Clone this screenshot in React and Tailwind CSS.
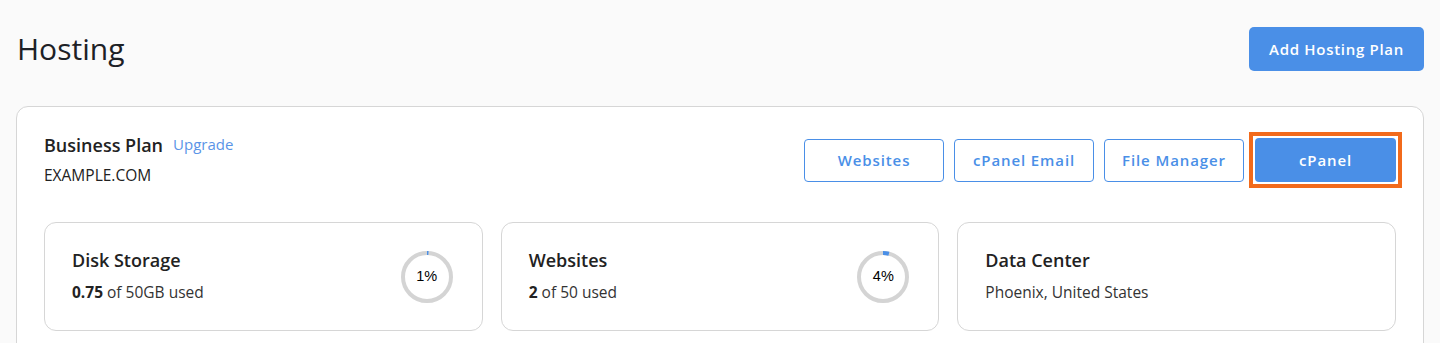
import React from "react";

function Ring({ pct }) {
  const r = 24;
  const c = 2 * Math.PI * r;
  const len = (pct / 100) * c;
  return (
    <div className="relative w-[52px] h-[52px] shrink-0">
      <svg width="52" height="52" viewBox="0 0 52 52" className="absolute inset-0">
        <circle cx="26" cy="26" r={r} fill="none" stroke="#d4d4d4" strokeWidth="4" />
        <circle
          cx="26"
          cy="26"
          r={r}
          fill="none"
          stroke="#4a8fe7"
          strokeWidth="4"
          strokeDasharray={`${len} ${c}`}
          transform="rotate(-90 26 26)"
        />
      </svg>
      <div
        className="absolute inset-0 flex items-center justify-center text-[14.5px] text-black"
        style={{ fontFamily: '"Liberation Sans", Arial, sans-serif' }}
      >
        {pct}%
      </div>
    </div>
  );
}

function StatCard({ title, children, pct }) {
  return (
    <div className="flex-1 h-[109px] bg-white border border-[#d6d6d6] rounded-[12px] pl-[27px] pr-[29px] flex items-center justify-between">
      <div className="flex flex-col mb-[4px]">
        <div className="text-[18px] leading-[24px] font-semibold text-[#222]">{title}</div>
        <div className="mt-[10px] text-[15.5px] leading-[20px] text-[#333]">{children}</div>
      </div>
      {pct !== undefined && <Ring pct={pct} />}
    </div>
  );
}

export default function App() {
  const outlineBtn =
    "w-[140px] h-[43px] rounded-[4px] border border-[#4a8fe7] bg-white text-[#4a8fe7] text-[15px] font-semibold tracking-[0.9px] flex items-center justify-center";
  return (
    <div
      className="min-h-[343px] bg-[#fafafa] px-4 pt-[27px]"
      style={{ fontFamily: '"Open Sans", "Noto Sans", sans-serif' }}
    >
      <div className="flex items-center justify-between h-[44px]">
        <h1 className="text-[30px] leading-[40px] font-medium text-[#1d2126] ml-[1px]">Hosting</h1>
        <button className="w-[175px] h-[44px] rounded-[5px] bg-[#4a8fe7] text-white text-[15px] font-semibold tracking-[0.7px]">
          Add Hosting Plan
        </button>
      </div>

      <div className="mt-[35px] bg-white border border-[#d6d6d6] rounded-[12px] px-[27px] pt-[25px] pb-[27px]">
        <div className="h-[56px] flex items-center justify-between">
          <div className="flex flex-col mb-[2px]">
            <div className="flex items-center gap-[10px]">
              <span className="text-[18px] leading-[24px] font-semibold text-[#222]">Business Plan</span>
              <span className="text-[15px] leading-[20px] text-[#5a94e7] -mt-[2px]">Upgrade</span>
            </div>
            <div className="mt-[8px] text-[15.5px] leading-[20px] text-[#222]">EXAMPLE.COM</div>
          </div>
          <div className="flex items-center gap-[10px]">
            <button className={outlineBtn}>Websites</button>
            <button className={outlineBtn}>cPanel Email</button>
            <button className={outlineBtn}>File Manager</button>
            <div className="-ml-[5px] border-[4px] border-[#f26a1b] p-[2px] bg-white mr-[-6px]">
              <button className="w-[141px] h-[44px] rounded-[4px] bg-[#4a8fe7] text-white text-[15px] font-semibold tracking-[0.9px] flex items-center justify-center">
                cPanel
              </button>
            </div>
          </div>
        </div>

        <div className="mt-[34px] flex gap-[18px]">
          <StatCard title="Disk Storage" pct={1}>
            <span className="font-bold text-[#222]">0.75</span> of 50GB used
          </StatCard>
          <StatCard title="Websites" pct={4}>
            <span className="font-bold text-[#222]">2</span> of 50 used
          </StatCard>
          <StatCard title="Data Center">Phoenix, United States</StatCard>
        </div>
      </div>
    </div>
  );
}
